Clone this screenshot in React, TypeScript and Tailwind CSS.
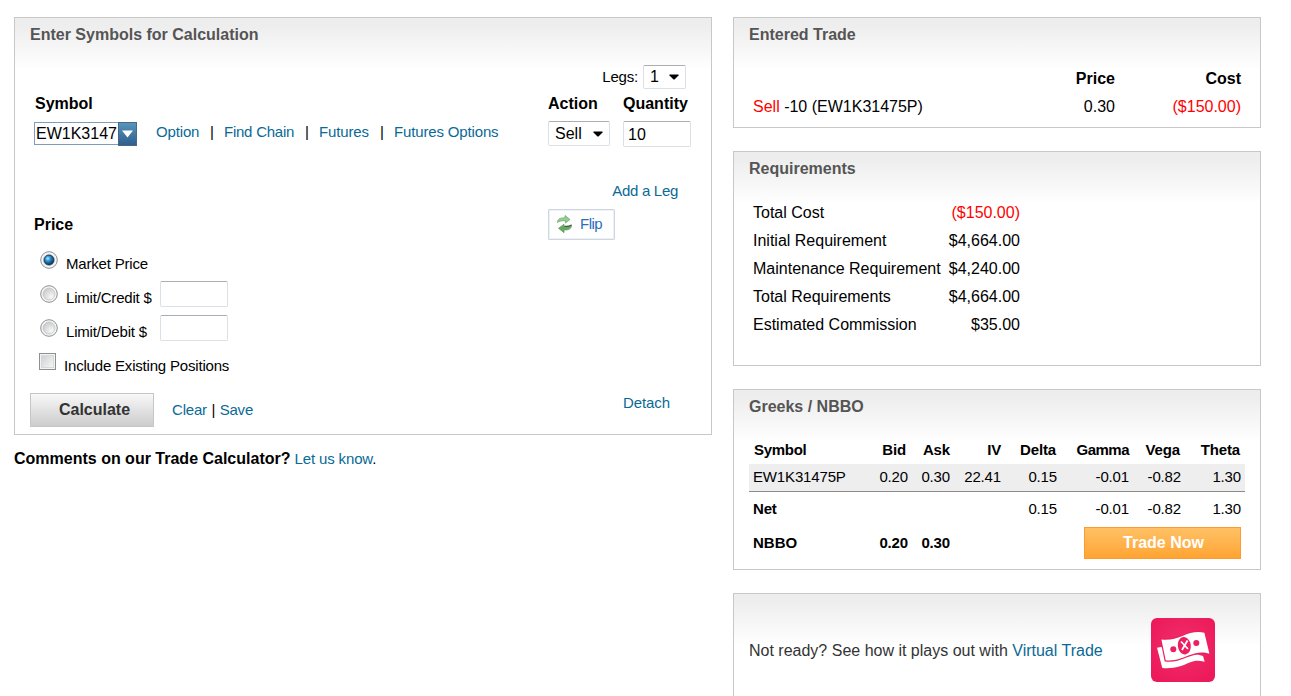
import React, { useState } from 'react';
import clsx from 'clsx';

const greekHeaders = ['Bid', 'Ask', 'IV', 'Delta', 'Gamma', 'Vega', 'Theta'];
const greekValues = ['0.20', '0.30', '22.41', '0.15', '-0.01', '-0.82', '1.30'];
const netValues = ['', '', '', '0.15', '-0.01', '-0.82', '1.30'];

const requirements = [
  { label: 'Total Cost', value: '($150.00)', negative: true },
  { label: 'Initial Requirement', value: '$4,664.00' },
  { label: 'Maintenance Requirement', value: '$4,240.00' },
  { label: 'Total Requirements', value: '$4,664.00' },
  { label: 'Estimated Commission', value: '$35.00' },
];

const greekGrid = 'grid grid-cols-[108px_47px_42px_51px_56px_72px_52px_60px] px-1 items-center';
const fieldStyle = 'bg-white border border-[#dbdfe6] border-t-[#abadb3] rounded-[2px] text-[16px] tracking-normal outline-none';

function Panel({ title, className, children }: { title?: string; className?: string; children: React.ReactNode }) {
  return (
    <section
      className={clsx(
        'border border-[#c8c8c8] bg-[linear-gradient(to_bottom,#ededed_0px,#ededed_6px,#ffffff_52px)]',
        className
      )}
    >
      {title && (
        <h2 className="h-8 pl-[15px] leading-[33px] text-[16px] tracking-normal font-bold text-[#555555]">{title}</h2>
      )}
      {children}
    </section>
  );
}

function Link({ className, children }: { className?: string; children: React.ReactNode }) {
  return (
    <a href="#" className={clsx('text-[#0a6a96] whitespace-nowrap', className)}>
      {children}
    </a>
  );
}

function Caret() {
  return (
    <svg width="10" height="6" viewBox="0 0 10 6">
      <path d="M0.500 0.500h9v1L5.500 5.500h-1l-4-4z" fill="#000" />
    </svg>
  );
}

function Radio({ checked, onClick }: { checked: boolean; onClick: () => void }) {
  return (
    <button onClick={onClick} className="ml-[25px] mt-1 w-[18px] h-[18px]">
      <svg width="18" height="18" viewBox="0 0 18 18">
        <defs>
          <radialGradient id="radioOff" cx="0.7" cy="0.75" r="0.8">
            <stop offset="0" stopColor="#f8f8f8" />
            <stop offset="1" stopColor="#c8cacc" />
          </radialGradient>
          <radialGradient id="radioOn" cx="0.38" cy="0.35" r="0.65">
            <stop offset="0" stopColor="#b5ecff" />
            <stop offset="0.4" stopColor="#2c93d1" />
            <stop offset="1" stopColor="#0b3257" />
          </radialGradient>
        </defs>
        <circle cx="9" cy="9" r="8.3" fill="#f5f5f5" stroke="#8e8f8f" strokeWidth="1" />
        {checked ? (
          <>
            <circle cx="9" cy="9" r="6" fill="#c3cbd3" />
            <circle cx="9" cy="9" r="4.9" fill="url(#radioOn)" stroke="#123456" strokeWidth="0.8" />
          </>
        ) : (
          <circle cx="9" cy="9" r="6" fill="url(#radioOff)" stroke="#c0c2c5" strokeWidth="0.7" />
        )}
      </svg>
    </button>
  );
}

function FlipIcon() {
  return (
    <svg width="17" height="20" viewBox="0 0 17 20" className="mb-px">
      <path d="M1.500 8.500C1.500 5 4 3.700 9 3.900V1.500l5 4-4.500 3.500V6.800C6 6.500 3.500 6.800 1.500 8.500z" fill="#92cf91" stroke="#6fa974" strokeWidth="0.8" />
      <path d="M15.500 11c0 4-3 5.200-7.500 4.900v2.800l-5.500-4.400L8 10.300v2.400c3.500.3 5.500.2 7.500-1.700z" fill="#66a866" stroke="#6aa06a" strokeWidth="0.8" />
      <path d="M8.500 12.300c3 .4 5-.1 7-1.300" fill="none" stroke="#3f5943" strokeWidth="1.200" />
    </svg>
  );
}

function MoneyIcon() {
  return (
    <svg width="64" height="64" viewBox="0 0 64 64">
      <defs>
        <radialGradient id="moneyBg" cx="0.5" cy="0.45" r="0.6">
          <stop offset="0" stopColor="#f0306c" />
          <stop offset="1" stopColor="#ed1a5b" />
        </radialGradient>
      </defs>
      <rect width="64" height="64" rx="6" fill="url(#moneyBg)" />
      <path d="M6 29.700l4-.7 30 8c5-1 8-.5 12 1l1.700 5.700c-6-1.500-10-1.500-15 .8-8 3.500-16 6.500-27.400 5.500z" fill="#fff" />
      <path
        d="M10.400 21.500c8 1 14-.7 21-3.500 7.500-3 14-5 22-3.200l5 21c-7-2.500-13-1.300-20.400 1.500-7.500 3-14 6-23.300 5z"
        fill="#fff"
        stroke="#ed1f60"
        strokeWidth="2.400"
        paintOrder="stroke"
      />
      <ellipse cx="33.300" cy="27.700" rx="6.500" ry="8.800" transform="rotate(-8 33.300 27.700)" fill="#ed1f60" />
      <circle cx="22.300" cy="31.300" r="3" fill="#ed1f60" />
      <circle cx="45.300" cy="25" r="3" fill="#ed1f60" />
      <path d="M30 23.500l7 7.500M36.500 22.500l-5.500 9.500" stroke="#fff" strokeWidth="1.800" />
    </svg>
  );
}

export default function App() {
  const [priceType, setPriceType] = useState('market');
  const [quantity, setQuantity] = useState('10');

  return (
    <div className="flex items-start h-[696px] overflow-hidden bg-white pt-[17px] pl-[14px] font-['Liberation_Sans',Arial,sans-serif] text-[15px] text-black">
      {/* Calculator */}
      <div className="w-[698px] mr-[21px]">
        <Panel title="Enter Symbols for Calculation" className="h-[418px] tracking-[-0.19px]">
          <div className="flex items-center justify-end mt-[15px] h-6 pr-[25px]">
            <span className="mr-[5px]">Legs:</span>
            <button className={clsx(fieldStyle, 'flex items-center justify-between w-[43px] h-6 pl-1.5 pr-[6px]')}>
              1 <Caret />
            </button>
          </div>

          <div className="flex items-center h-7 pt-0.5 text-[16px] font-bold tracking-normal">
            <span className="w-[514px] pl-5">Symbol</span>
            <span className="w-[75px] pl-[19px]">Action</span>
            <span className="pl-[19px]">Quantity</span>
          </div>

          <div className="flex items-start h-8 pt-1">
            <div className="flex items-start ml-[19px] mt-px w-[103px]">
              <div className="w-[84px] h-[23px] border border-r-0 border-[#7f9db9] bg-white pl-[1px] text-[16px] tracking-normal leading-[21px] overflow-hidden">
                EW1K3147
              </div>
              <button className="w-[19px] h-6 border border-[#4a6784] bg-linear-to-b from-[#5794bd] to-[#2f5f8e] flex items-center justify-center">
                <svg width="11" height="8" viewBox="0 0 11 8">
                  <path d="M0 0.500h11L5.500 7.500z" fill="#fff" />
                </svg>
              </button>
            </div>
            <div className="flex ml-[19px] w-[392px] leading-[22px] tracking-[-0.15px]">
              <Link className="w-[54px]">Option</Link>
              <span className="w-[14px]">|</span>
              <Link className="w-[81px] tracking-[-0.24px]">Find Chain</Link>
              <span className="w-[14px]">|</span>
              <Link className="w-[61px]">Futures</Link>
              <span className="w-[14px]">|</span>
              <Link>Futures Options</Link>
            </div>
            <button className={clsx(fieldStyle, 'flex items-center justify-between w-[62px] h-[25px] pl-1.5 pr-[6px]')}>
              Sell <Caret />
            </button>
            <input
              type="text"
              value={quantity}
              onChange={(e) => setQuantity(e.target.value)}
              className={clsx(fieldStyle, 'ml-[13px] w-[68px] h-[26px] pl-1 pt-0.5')}
            />
          </div>

          <div className="flex items-center justify-end mt-[30px] h-6 pr-[33px]">
            <Link className="tracking-[-0.3px]">Add a Leg</Link>
          </div>

          <div className="flex items-center mt-1.5 h-[31px]">
            <span className="w-[533px] pl-[19px] text-[16px] font-bold tracking-normal">Price</span>
            <button className="flex items-center w-[67px] h-[31px] border border-[#cdd6e2] shadow-[inset_0_0_0_1px_#edf0f5] rounded-[1px] pl-[7px] text-[#2a6ebb] tracking-[-0.5px]">
              <FlipIcon />
              <span className="ml-[7px]">Flip</span>
            </button>
          </div>

          {/* Price options */}
          <div className="flex items-start mt-[7px] h-[34px]">
            <Radio checked={priceType === 'market'} onClick={() => setPriceType('market')} />
            <span className="ml-2 leading-[34px]">Market Price</span>
          </div>
          <div className="flex items-start h-[34px]">
            <Radio checked={priceType === 'credit'} onClick={() => setPriceType('credit')} />
            <span className="ml-2 w-[94px] leading-[34px]">Limit/Credit $</span>
            <input type="text" className={clsx(fieldStyle, 'w-[68px] h-[26px] px-1')} />
          </div>
          <div className="flex items-start h-[34px]">
            <Radio checked={priceType === 'debit'} onClick={() => setPriceType('debit')} />
            <span className="ml-2 w-[94px] leading-[34px]">Limit/Debit $</span>
            <input type="text" className={clsx(fieldStyle, 'w-[68px] h-[26px] px-1')} />
          </div>
          <div className="flex items-start h-[34px]">
            <span className="ml-6 mt-1 w-[17px] h-[17px] border border-[#8e8f8f] bg-[#f4f4f4] p-px">
              <span className="block w-full h-full border border-[#d6d8da] bg-linear-to-br from-[#cfd1d4] to-[#f6f6f6]" />
            </span>
            <span className="ml-2 leading-[34px]">Include Existing Positions</span>
          </div>

          <div className="flex items-center mt-[10px] h-[34px] pl-[15px]">
            <button className="w-[124px] h-[34px] border border-[#c6c6c6] bg-linear-to-b from-[#f8f8f8] to-[#cccccc] pl-[5px] text-[16px] tracking-normal font-bold text-[#333333]">
              Calculate
            </button>
            <Link className="ml-[18px]">Clear</Link>
            <span className="mx-[4.500px]">|</span>
            <Link>Save</Link>
            <Link className="ml-auto mr-[41px] mb-[14px] tracking-[-0.1px]">Detach</Link>
          </div>
        </Panel>

        <p className="mt-3 h-6 leading-6 whitespace-nowrap tracking-[-0.14px]">
          <b className="text-[16px] tracking-normal">Comments on our Trade Calculator?</b> <Link>Let us know</Link>.
        </p>
      </div>

      {/* Results */}
      <div className="w-[528px]">
        <Panel title="Entered Trade" className="h-[111px] text-[16px]">
          <div className="grid grid-cols-[1fr_120px_126px] pl-[19px] pr-[19px] mt-[15px] leading-7">
            <span />
            <b className="text-right">Price</b>
            <b className="text-right">Cost</b>
            <span>
              <span className="text-[#ff0000]">Sell</span> -10 (EW1K31475P)
            </span>
            <span className="text-right">0.30</span>
            <span className="text-right text-[#ff0000]">($150.00)</span>
          </div>
        </Panel>

        <Panel title="Requirements" className="mt-[23px] h-[215px] text-[16px]">
          <div className="w-[267px] ml-[19px] mt-[15px]">
            {requirements.map((row) => (
              <div key={row.label} className="flex justify-between leading-7 whitespace-nowrap">
                <span>{row.label}</span>
                <span className={clsx(row.negative && 'text-[#ff0000]')}>{row.value}</span>
              </div>
            ))}
          </div>
        </Panel>

        <Panel title="Greeks / NBBO" className="mt-[23px] h-[181px] tracking-[-0.15px]">
          <div className="mx-[15px] mt-[14px]">
            <div className={clsx(greekGrid, 'h-7 font-bold')}>
              <span className="pl-px tracking-[-0.3px]">Symbol</span>
              {greekHeaders.map((h) => (
                <span
                  key={h}
                  className={clsx(
                    'text-right',
                    h === 'Bid' && 'pr-0.5',
                    (h === 'Delta' || h === 'Vega' || h === 'Theta') && 'pr-px',
                    h === 'Gamma' && 'tracking-[-0.5px]'
                  )}
                >
                  {h}
                </span>
              ))}
            </div>
            <div className={clsx(greekGrid, 'h-7 bg-[#eeeeee] border-b border-[#8c8c8c]')}>
              <span>EW1K31475P</span>
              {greekValues.map((v, i) => (
                <span key={i} className="text-right">{v}</span>
              ))}
            </div>
            <div className={clsx(greekGrid, 'h-[35px]')}>
              <b>Net</b>
              {netValues.map((v, i) => (
                <span key={i} className="text-right">{v}</span>
              ))}
            </div>
            <div className={clsx(greekGrid, 'h-8 font-bold')}>
              <span className="tracking-normal">NBBO</span>
              <span className="text-right">0.20</span>
              <span className="text-right">0.30</span>
              <button className="col-span-5 justify-self-end w-[157px] h-8 border border-[#ff9933] bg-linear-to-b from-[#ffc164] to-[#ffa431] pl-0.5 text-[16px] tracking-normal text-white">
                Trade Now
              </button>
            </div>
          </div>
        </Panel>

        <Panel className="mt-[23px] h-[115px]">
          <div className="flex items-center h-[113px] pl-[15px] text-[16px] text-[#333333]">
            <span className="whitespace-nowrap">
              Not ready? See how it plays out with <Link>Virtual Trade</Link>
            </span>
            <span className="ml-auto mr-[45px] mb-0.5">
              <MoneyIcon />
            </span>
          </div>
        </Panel>
      </div>
    </div>
  );
}
